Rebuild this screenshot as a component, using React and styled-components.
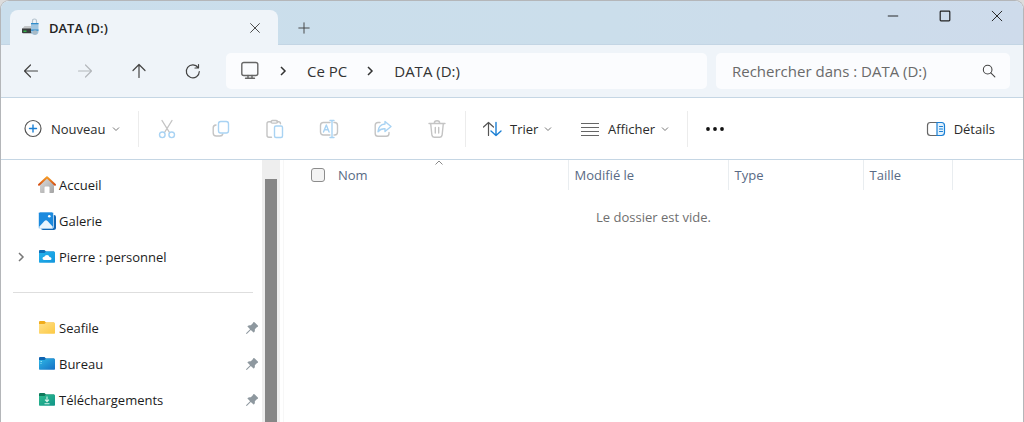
import React, { useState } from "react";
import styled, { createGlobalStyle } from "styled-components";

const GlobalStyle = createGlobalStyle`
    * {
        box-sizing: border-box;
    }
    body {
        margin: 0;
        background-color: #dcdcdc;
        font-family: "Open Sans", "Noto Sans", sans-serif;
        font-size: 13px;
        color: #222;
    }
    button, input {
        font: inherit;
        color: inherit;
    }
    button {
        padding: 0;
        border: 0;
        background: none;
    }
    svg {
        display: block;
        flex-shrink: 0;
    }
`;

const Window = styled.div`
    min-height: 100vh;
    display: flex;
    flex-direction: column;
    border: 1px solid #b4b6b9;
    border-bottom: 0;
    border-radius: 9px 9px 0 0;
    background-color: white;
    overflow: hidden;
`;

const TitleBar = styled.header`
    height: 44px;
    display: flex;
    align-items: flex-end;
    padding-left: 9px;
    background: linear-gradient(to right, #cadeec, #cbdeeb 60%, #cedbeb);
    border-bottom: 1px solid #c3d5e4;
`;

const Tab = styled.div`
    width: 268px;
    height: 35px;
    margin-bottom: -1px;
    padding: 0 15px 0 11px;
    display: flex;
    align-items: center;
    border-radius: 8px 8px 0 0;
    background-color: #eff4f9;
    font-weight: 600;

    span {
        flex: 1;
        margin-left: 8px;
    }
`;

const NewTab = styled.button`
    width: 32px;
    height: 32px;
    margin-left: 10px;
    display: grid;
    place-items: center;
`;

const WindowButtons = styled.div`
    align-self: flex-start;
    margin-left: auto;
    display: flex;

    button {
        width: 52px;
        height: 30px;
        display: grid;
        place-items: center;
    }
`;

const NavBar = styled.nav`
    height: 53px;
    display: flex;
    align-items: center;
    gap: 9px;
    padding: 0 13px 0 14px;
    background-color: #eff4f9;
    border-bottom: 1px solid #c5d6e4;
`;

const NavButtons = styled.div`
    display: flex;
    gap: 22px;
    margin-right: 8px;
`;

const IconButton = styled.button`
    width: 32px;
    height: 32px;
    display: grid;
    place-items: center;
    color: ${(props) => (props.disabled ? "#b4b8bc" : "#444")};
`;

const Address = styled.div`
    flex: 1;
    height: 36px;
    padding-left: 14px;
    display: flex;
    align-items: center;
    border-radius: 5px;
    background-color: #fbfcfe;
    font-size: 15px;
    color: #333;

    a {
        color: inherit;
        text-decoration: none;
    }
    a + svg, svg + svg {
        margin: 0 15px 0 14px;
    }
`;

const Search = styled.form`
    width: 294px;
    height: 36px;
    padding: 0 12px 0 16px;
    display: flex;
    align-items: center;
    border-radius: 5px;
    background-color: #fbfcfe;
    font-size: 15px;

    input {
        flex: 1;
        min-width: 0;
        padding: 0;
        border: 0;
        outline: 0;
        background: none;
    }
    input::placeholder {
        color: #6a6a6a;
        opacity: 1;
    }
    button {
        color: #444;
    }
`;

const CommandBar = styled.div`
    height: 62px;
    display: flex;
    align-items: center;
    padding: 0 28px 0 22px;
    border-bottom: 1px solid #c5d6e4;
`;

const Command = styled.button`
    height: 36px;
    width: ${(props) => props.$width};
    display: flex;
    align-items: center;
    gap: 8px;
    color: #2b2b2b;
    white-space: nowrap;

    svg:last-child {
        margin-left: -2px;
    }
`;

const Separator = styled.div`
    width: 1px;
    height: 36px;
    background-color: #ececec;
`;

const FileActions = styled.div`
    display: flex;
    gap: 22px;
    margin: 0 12px;
`;

const ViewCommands = styled.div`
    display: flex;
    margin-left: 16px;
`;

const MoreButton = styled(IconButton)`
    margin-left: 11px;
    color: #111;
`;

const DetailsButton = styled(Command)`
    margin-left: auto;

    svg:last-child {
        margin: 0;
    }
`;

const Body = styled.div`
    flex: 1;
    display: flex;
`;

const Sidebar = styled.aside`
    width: 261px;
    padding-top: 7px;

    ul {
        list-style: none;
        margin: 0;
        padding: 0;
    }
    hr {
        height: 1px;
        margin: 17px 9px 17px 12px;
        border: 0;
        background-color: #dedede;
    }
`;

const SidebarItem = styled.li`
    height: 36px;
    padding: 0 3px 0 11px;
    display: flex;
    align-items: center;

    a {
        flex: 1;
        display: flex;
        align-items: center;
        gap: 2px;
        color: #1c1c1c;
        text-decoration: none;
    }
`;

const Expander = styled.button`
    width: 16px;
    height: 20px;
    margin-right: 9px;
    display: grid;
    place-items: center;
    color: #777;
`;

const ScrollTrack = styled.div`
    width: 18px;
    padding: 19px 3px 0;
    display: flex;
    background-color: #eeeeee;

    div {
        flex: 1;
        background-color: #868686;
    }
`;

const Main = styled.main`
    flex: 1;
    margin-left: 3px;
    border-left: 1px solid #f7f7f7;
`;

const FileTable = styled.table`
    width: 100%;
    table-layout: fixed;
    border-collapse: collapse;

    th {
        height: 30px;
        padding: 0 0 0 6px;
        border-right: 1px solid #e9edf0;
        font-weight: 400;
        text-align: left;
        color: #596a84;
    }
    th:first-child, th:last-child {
        border-right: 0;
    }
    td {
        padding: 18px 0;
        text-align: center;
        color: #6f6f6f;
    }
`;

const NameHeader = styled.th`
    && {
        position: relative;
        padding: 0;
    }

    label {
        display: flex;
        align-items: center;
        gap: 13px;
    }
    svg {
        position: absolute;
        top: 0;
        left: 50%;
        transform: translateX(-50%);
    }
`;

const CheckBox = styled.input`
    appearance: none;
    width: 14px;
    height: 14px;
    margin: 0;
    border: 1px solid #8c8c8c;
    border-radius: 3px;
    background-color: #f3f3f3;

    &:checked {
        background-color: #0f6cbd;
    }
`;


const Glyph = ({ size = 20, children, ...rest }) => (
    <svg width={size} height={size} viewBox="0 0 20 20" fill="none" stroke="currentColor"
        strokeWidth="1.2" strokeLinecap="round" strokeLinejoin="round" aria-hidden="true" {...rest}>
        {children}
    </svg>
);

const ChevronDown = () => (
    <svg width="8" height="8" viewBox="0 0 8 8" fill="none" stroke="#777" aria-hidden="true">
        <path d="M1 2.500l3 3 3-3" />
    </svg>
);

const ChevronRight = ({ color = "#333" }) => (
    <svg width="18" height="18" viewBox="0 0 18 18" fill="none" stroke={color} strokeWidth="1.500" aria-hidden="true">
        <path d="M7 5l4 4-4 4" />
    </svg>
);

const DriveIcon = () => (
    <svg width="20" height="20" viewBox="0 0 20 20" aria-hidden="true">
        <path d="M3.500 8H12l1 3H1z" fill="#c4c7c9" />
        <path d="M1 10.500h11v4.700H2q-1 0-1-1z" fill="#3a3d3f" />
        <path d="M2.500 12.500h3V14h-3z" fill="#35b34a" />
        <path d="M11.500 5V3q0-2 2-2t2 2v3" fill="none" stroke="#b5c4d0" strokeWidth="1.200" />
        <path d="M10 5h7.500v8.500q0 3-3.500 3.500-4-.5-4-3.500z" fill="#9fc5e0" />
        <path d="M10 5h7.500v1.300H10zM10 11.500h7.500v1.300H10z" fill="#2f8ccb" />
        <circle cx="14" cy="14.500" r="2.300" fill="#a9bac6" />
    </svg>
);

const HomeIcon = () => (
    <svg width="20" height="20" viewBox="0 0 20 20" aria-hidden="true">
        <defs>
            <linearGradient id="wall" x1="0" y1="0" x2="1" y2="1">
                <stop offset="0" stopColor="#dcdcdc" />
                <stop offset="1" stopColor="#a3a3a3" />
            </linearGradient>
            <linearGradient id="roof" x1="0" y1="0" x2="0" y2="1">
                <stop offset="0" stopColor="#f59a24" />
                <stop offset="1" stopColor="#d34f14" />
            </linearGradient>
        </defs>
        <path d="M3 9.500L10 3l7 6.500V17q0 1-1 1h-3.500v-5.500q0-1-1-1h-3q-1 0-1 1V18H4q-1 0-1-1z" fill="url(#wall)" />
        <path d="M2 9.800L10 2.300l8 7.500" fill="none" stroke="url(#roof)" strokeWidth="2" strokeLinecap="round" strokeLinejoin="round" />
    </svg>
);

const GalleryIcon = () => (
    <svg width="20" height="20" viewBox="0 0 20 20" aria-hidden="true">
        <path d="M4 4h13q2 0 2 2v10.500q0 2.500-2.500 2.500H6q-2 0-2-2z" fill="#1267b4" />
        <path d="M3 1h12q1.500 0 1.500 1.500v13.500q0 1.500-1.500 1.500H3q-1.500 0-1.500-1.500V2.500Q1.500 1 3 1z" fill="#1b8ade" stroke="white" strokeWidth="0.600" />
        <path d="M2 16l5.500-6q1.500-1.500 3 0l5.500 6q-.4 1-1.300 1H3.300Q2.300 17 2 16z" fill="#e9f5fd" />
        <circle cx="12.300" cy="5.200" r="1.300" fill="white" />
    </svg>
);

const folderColors = {
    cloud: ["#0f6fb8", "#25b5ee", "#1295dc"],
    yellow: ["#f0ac1c", "#ffe08a", "#fcc944"],
    blue: ["#0f63b0", "#2fb9e6", "#156fc4"],
    green: ["#0f7a5c", "#2fbd90", "#109488"],
};

const FolderIcon = ({ kind }) => {
    const [back, from, to] = folderColors[kind];
    return (
        <svg width="20" height="20" viewBox="0 0 20 20" aria-hidden="true">
            <defs>
                <linearGradient id={"folder-" + kind} x1="0" y1="0" x2="1" y2="1">
                    <stop offset="0" stopColor={from} />
                    <stop offset="1" stopColor={to} />
                </linearGradient>
            </defs>
            <path d="M2 4q0-1 1-1h4.500l1.500 1.500h8V8H2z" fill={back} />
            <path d="M2 6h5.500L9 4.500h8q1 0 1 1V15q0 .700-.700.700H2.700Q2 15.700 2 15z" fill={"url(#folder-" + kind + ")"} />
            {kind === "cloud" && <path d="M7 13q-1.500-.3-1.500-1.700T7.300 9.800Q8 8 10 8t2.500 2q2 0 2 1.500T13 13z" fill="white" />}
            {kind === "green" && <path d="M10 6.500v5M8 9.700l2 2 2-2M7.500 13.700h5" fill="none" stroke="#d9f5ea" strokeWidth="1.100" />}
            {kind === "blue" && <path d="M3.500 7.500h1.500M3.500 9.500h1" stroke="#8ce0f5" />}
        </svg>
    );
};

const PinIcon = () => (
    <svg width="14" height="14" viewBox="0 0 14 14" fill="#8e989f" aria-hidden="true">
        <path d="M8.300 1.200q.6-.6 1.200 0l3.300 3.300q.6.600 0 1.200l-1 .500-2 2q.4 2-.7 3.100-.4.400-.8 0L5.800 8.900 2 12.700l-1 .3.300-1L5.100 8.200 2.700 5.800q-.4-.4 0-.8 1.100-1.100 3.100-.7l2-2z" />
    </svg>
);

const light = "#c4c4c4";
const lightBlue = "#a9d3f3";

const fileActions = [
    {
        label: "Couper",
        icon: <>
            <path d="M5 1.500l7.500 12M15 1.500l-7.500 12" stroke={light} />
            <circle cx="5.300" cy="15.800" r="2.800" stroke={lightBlue} />
            <circle cx="14.700" cy="15.800" r="2.800" stroke={lightBlue} />
        </>,
    },
    {
        label: "Copier",
        icon: <>
            <path d="M5 6q-2.800.3-2.800 2.800V14q0 3 3 3H9q2.300 0 2.800-2" stroke={light} />
            <rect x="7.500" y="2.500" width="10" height="11.500" rx="2.200" stroke={lightBlue} />
        </>,
    },
    {
        label: "Coller",
        icon: <>
            <path d="M6.500 2.800H4q-2 0-2 2v11.400q0 2 2 2h2.500M12 2.800h1.500q2 0 2 2" stroke={light} />
            <rect x="6" y="1.500" width="6.500" height="2.600" rx="1.300" stroke={light} />
            <rect x="9.500" y="7" width="8" height="11.500" rx="1.500" stroke={lightBlue} />
        </>,
    },
    {
        label: "Renommer",
        icon: <>
            <path d="M11 3.500H4.500q-3 0-3 3v6.500q0 3 3 3H11M15 3.500h.7q2.800 0 2.800 3v6.500q0 3-2.800 3H15" stroke={light} />
            <path d="M13 1.500v17M11 1.500h4M11 18.500h4M4.500 13L7.300 6l2.800 7M5.500 10.800h3.700" stroke={lightBlue} />
        </>,
    },
    {
        label: "Partager",
        icon: <>
            <path d="M7 3.500H5q-2.800 0-2.800 2.800v8.200q0 2.800 2.800 2.800h8.200q2.800 0 2.800-2.800v-1" stroke={light} />
            <path d="M12 2.500l6 5-6 5V9.800q-4.500-.3-7 3 .5-7.300 7-7.800z" stroke={lightBlue} />
        </>,
    },
    {
        label: "Supprimer",
        icon: <g stroke={light}>
            <path d="M2 4.500h16M7.300 4.300q0-2.600 2.700-2.600t2.700 2.600M3.700 4.700l1.200 11.500q.3 2 2.200 2h5.800q1.900 0 2.200-2l1.200-11.500M8.300 8.500v5.500M11.700 8.500v5.500" />
        </g>,
    },
];

const places = [
    { name: "Accueil", icon: <HomeIcon /> },
    { name: "Galerie", icon: <GalleryIcon /> },
    { name: "Pierre : personnel", icon: <FolderIcon kind="cloud" />, expandable: true },
];

const pinned = [
    { name: "Seafile", icon: <FolderIcon kind="yellow" /> },
    { name: "Bureau", icon: <FolderIcon kind="blue" /> },
    { name: "Téléchargements", icon: <FolderIcon kind="green" /> },
];

const Place = ({ name, icon, expandable, isPinned }) => (
    <SidebarItem>
        <Expander as={expandable ? "button" : "span"} aria-label={expandable ? "Développer" : undefined}>
            {expandable && <ChevronRight color="#777" />}
        </Expander>
        <a href="#">{icon}{name}</a>
        {isPinned && <PinIcon />}
    </SidebarItem>
);

export const App = () => {
    const [query, setQuery] = useState("");

    return (
        <>
            <GlobalStyle />
            <Window>
                <TitleBar>
                    <Tab>
                        <DriveIcon />
                        <span>DATA (D:)</span>
                        <button aria-label="Fermer l'onglet">
                            <Glyph size={16} stroke="#444"><path d="M4.500 4.500l11 11M15.500 4.500l-11 11" /></Glyph>
                        </button>
                    </Tab>
                    <NewTab aria-label="Nouvel onglet">
                        <Glyph size={16} stroke="#444"><path d="M10 3.500v13M3.500 10h13" /></Glyph>
                    </NewTab>
                    <WindowButtons>
                        <button aria-label="Réduire">
                            <Glyph size={16} stroke="#222"><path d="M4 10h12" /></Glyph>
                        </button>
                        <button aria-label="Agrandir">
                            <Glyph size={16} stroke="#222" strokeWidth="1.500"><rect x="4" y="4" width="12" height="12" rx="1" /></Glyph>
                        </button>
                        <button aria-label="Fermer">
                            <Glyph size={16} stroke="#222"><path d="M4 4l12 12M16 4L4 16" /></Glyph>
                        </button>
                    </WindowButtons>
                </TitleBar>

                <NavBar>
                    <NavButtons>
                        <IconButton aria-label="Précédent">
                            <Glyph><path d="M16.500 10h-13M9.500 4l-6 6 6 6" /></Glyph>
                        </IconButton>
                        <IconButton aria-label="Suivant" disabled>
                            <Glyph><path d="M3.500 10h13M10.500 4l6 6-6 6" /></Glyph>
                        </IconButton>
                        <IconButton aria-label="Monter">
                            <Glyph><path d="M10 16.500v-13M4 9.500l6-6 6 6" /></Glyph>
                        </IconButton>
                        <IconButton aria-label="Actualiser">
                            <Glyph><path d="M15.200 6.800A6.500 6.500 0 1 0 16.300 10.500M15.500 3.500V7h-3.500" /></Glyph>
                        </IconButton>
                    </NavButtons>
                    <Address>
                        <Glyph stroke="#666" strokeWidth="1.400">
                            <rect x="1.800" y="1.500" width="16" height="13" rx="2" />
                            <path d="M8 14.500v2.500M12 14.500v2.500M5.500 17.300h9" />
                        </Glyph>
                        <ChevronRight />
                        <a href="#">Ce PC</a>
                        <ChevronRight />
                        <a href="#">DATA (D:)</a>
                    </Address>
                    <Search onSubmit={(e) => e.preventDefault()}>
                        <input type="text" aria-label="Rechercher" placeholder="Rechercher dans : DATA (D:)"
                            value={query} onChange={(e) => setQuery(e.target.value)} />
                        <button type="submit" aria-label="Lancer la recherche">
                            <Glyph size={18}><circle cx="8.500" cy="8.500" r="4.800" /><path d="M12 12l4.500 4.500" /></Glyph>
                        </button>
                    </Search>
                </NavBar>

                <CommandBar>
                    <Command $width="115px">
                        <Glyph stroke="#555">
                            <circle cx="10" cy="9.500" r="8" />
                            <path d="M10 6v7M6.500 9.500h7" stroke="#1a7fd4" strokeWidth="1.400" />
                        </Glyph>
                        Nouveau
                        <ChevronDown />
                    </Command>
                    <Separator />
                    <FileActions>
                        {fileActions.map(({ label, icon }) => (
                            <IconButton key={label} aria-label={label} disabled>
                                <Glyph strokeWidth="1.400">{icon}</Glyph>
                            </IconButton>
                        ))}
                    </FileActions>
                    <Separator />
                    <ViewCommands>
                        <Command $width="98px">
                            <Glyph stroke="#555">
                                <path d="M6.500 16.500v-13M1.500 8l5-4.500 5 4.500" />
                                <path d="M14 3.500v13M9 12l5 4.500 5-4.500" stroke="#1a7fd4" strokeWidth="1.400" />
                            </Glyph>
                            Trier
                            <ChevronDown />
                        </Command>
                        <Command $width="107px">
                            <Glyph stroke="#666" strokeLinecap="butt">
                                <path d="M1 4.500h18M1 8.500h18M1 12.500h18M1 16.500h18" />
                            </Glyph>
                            Afficher
                            <ChevronDown />
                        </Command>
                    </ViewCommands>
                    <Separator />
                    <MoreButton aria-label="Plus">
                        <Glyph fill="currentColor" stroke="none">
                            <circle cx="3" cy="10" r="1.900" /><circle cx="10" cy="10" r="1.900" /><circle cx="17" cy="10" r="1.900" />
                        </Glyph>
                    </MoreButton>
                    <DetailsButton>
                        <Glyph stroke="#666">
                            <path d="M11 3.500H4.500Q1.500 3.500 1.500 6.500v7q0 3 3 3H11" />
                            <path d="M11 3.500h4.500q3 0 3 3v7q0 3-3 3H11z" fill="#e3f2fd" stroke="#1a7fd4" />
                            <path d="M13.500 7.500h3M13.500 10h3M13.500 12.500h3" stroke="#1a7fd4" />
                        </Glyph>
                        <span>Détails</span>
                    </DetailsButton>
                </CommandBar>

                <Body>
                    <Sidebar>
                        <ul>
                            {places.map((place) => <Place key={place.name} {...place} />)}
                        </ul>
                        <hr />
                        <ul>
                            {pinned.map((place) => <Place key={place.name} {...place} isPinned />)}
                        </ul>
                    </Sidebar>
                    <ScrollTrack><div /></ScrollTrack>
                    <Main>
                        <FileTable>
                            <colgroup>
                                <col width="27" />
                                <col width="257" />
                                <col width="160" />
                                <col width="135" />
                                <col width="89" />
                                <col />
                            </colgroup>
                            <thead>
                                <tr>
                                    <th />
                                    <NameHeader aria-sort="ascending">
                                        <label>
                                            <CheckBox type="checkbox" />
                                            Nom
                                        </label>
                                        <svg width="10" height="5" viewBox="0 0 10 5" fill="none" stroke="#888" aria-hidden="true">
                                            <path d="M1.500 4.500L5 1l3.500 3.500" />
                                        </svg>
                                    </NameHeader>
                                    <th>Modifié le</th>
                                    <th>Type</th>
                                    <th>Taille</th>
                                    <th />
                                </tr>
                            </thead>
                            <tbody>
                                <tr>
                                    <td colSpan="6">Le dossier est vide.</td>
                                </tr>
                            </tbody>
                        </FileTable>
                    </Main>
                </Body>
            </Window>
        </>
    );
};

export default App;
